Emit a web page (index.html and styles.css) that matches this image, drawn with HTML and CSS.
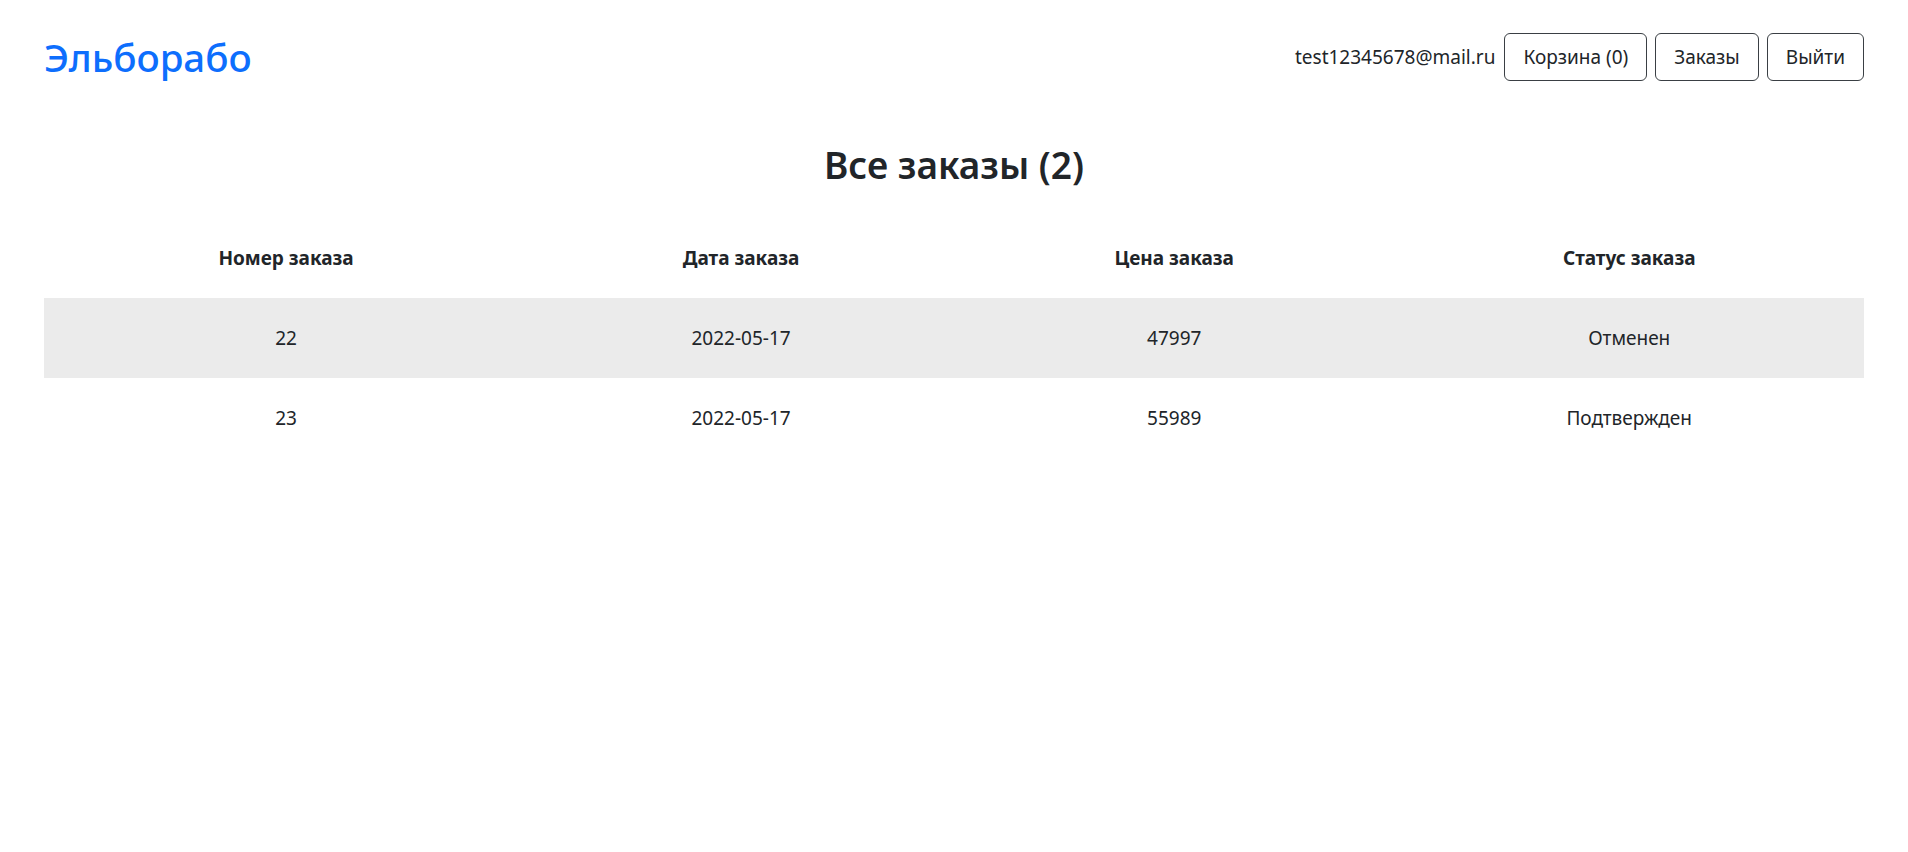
FILE: index.html
```html
<!DOCTYPE html>
<html lang="ru">
<head>
<meta charset="utf-8">
<title>Эльборабо — Заказы</title>
<link rel="stylesheet" href="styles.css">
</head>
<body>
<header class="topbar">
  <a class="brand" href="#">Эльборабо</a>
  <nav class="user-nav">
    <span class="user-email">test12345678@mail.ru</span>
    <button class="btn" type="button">Корзина (0)</button>
    <button class="btn" type="button">Заказы</button>
    <button class="btn" type="button">Выйти</button>
  </nav>
</header>
<main class="content">
  <h2 class="page-title">Все заказы (2)</h2>
  <table class="orders">
    <colgroup>
      <col class="col-num">
      <col class="col-date">
      <col class="col-price">
      <col class="col-status">
    </colgroup>
    <thead>
      <tr><th>Номер заказа</th><th>Дата заказа</th><th>Цена заказа</th><th>Статус заказа</th></tr>
    </thead>
    <tbody>
      <tr class="striped"><td>22</td><td>2022-05-17</td><td>47997</td><td>Отменен</td></tr>
      <tr><td>23</td><td>2022-05-17</td><td>55989</td><td>Подтвержден</td></tr>
    </tbody>
  </table>
</main>
</body>
</html>
```
FILE: styles.css
```css
* { box-sizing: border-box; }
html, body { margin: 0; padding: 0; }
body {
  font-family: "Noto Sans", "Open Sans", sans-serif;
  font-size: 19px;
  line-height: 1.5;
  color: #212529;
  background: #fff;
}
.topbar {
  display: flex;
  justify-content: space-between;
  align-items: center;
  padding: 33px 44px 0;
}
.brand {
  font-size: 38.5px;
  font-weight: 500;
  line-height: 48px;
  color: #0d6efd;
  text-decoration: none;
}
.user-nav {
  display: flex;
  align-items: center;
  gap: 8px;
}
.user-email { margin-right: 1px; }
.btn {
  font-family: inherit;
  font-size: 19px;
  line-height: 30px;
  color: #212529;
  background: #fff;
  border: 1px solid #3a3f44;
  border-radius: 6px;
  padding: 8px 18px;
  cursor: pointer;
}
.content { padding: 0 44px; }
.page-title {
  margin: 62px 0 31px;
  text-align: center;
  font-size: 37px;
  font-weight: 600;
  line-height: 44px;
}
.orders {
  width: 100%;
  border-collapse: collapse;
  text-align: center;
}
.col-num { width: 26.6%; }
.col-date { width: 23.4%; }
.col-price { width: 24.2%; }
.col-status { width: 25.8%; }
.orders th, .orders td {
  padding: 25px 10px;
  line-height: 30px;
  font-size: 19px;
}
.orders th { font-weight: 700; }
.orders td { font-weight: 400; }
.orders .striped { background: #ebebeb; }
```
